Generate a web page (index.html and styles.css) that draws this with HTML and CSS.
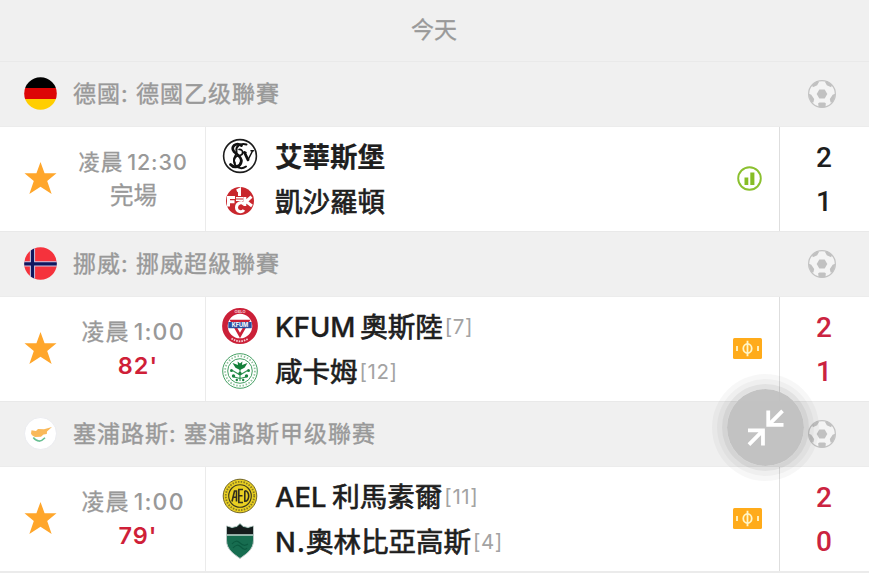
FILE: index.html
```
<!DOCTYPE html>
<html lang="zh-Hant">
<head>
  <meta charset="UTF-8">
  <meta name="viewport" content="width=device-width, initial-scale=1.0">
  <title>今天</title>
  <link rel="stylesheet" href="styles.css">
</head>
<body>

<!-- Shared icons -->
<svg class="defs" width="0" height="0">
  <symbol id="star" viewBox="0 0 34 34">
    <path fill="#ffa62b" d="M17 0.5 L21.2 12 H33.5 L23.9 20 L28.5 33.5 L17 25.9 L5.5 33.5 L10.1 20 L0.5 12 H12.8 Z"/>
  </symbol>
  <symbol id="ball" viewBox="0 0 28 28">
    <circle cx="14" cy="14" r="13.4" fill="#f4f4f4" stroke="#c3c3c3" stroke-width="1.2"/>
    <g fill="#c1c1c1">
      <path d="M11.3 9.5 H16.7 L19.3 14 L16.7 18.6 H11.3 L8.7 14 Z"/>
      <path d="M4 5 L9 0.9 L11 2 L9.2 5.3 L4.8 7.2 Z"/>
      <path d="M24 5 L19 0.9 L17 2 L18.8 5.3 L23.2 7.2 Z"/>
      <path d="M0.8 13.8 L3.3 14.8 L6.2 19 L5.4 22.4 L3.3 22.3 Q0.8 18.5 0.8 13.8 Z"/>
      <path d="M27.2 13.8 L24.7 14.8 L21.8 19 L22.6 22.4 L24.7 22.3 Q27.2 18.5 27.2 13.8 Z"/>
      <path d="M10.2 23.3 L11.5 22.4 H16.5 L17.8 23.3 L17.5 27 Q14 28.2 10.5 27 Z"/>
    </g>
  </symbol>
  <symbol id="pitch" viewBox="0 0 29 21">
    <rect width="29" height="21" rx="1.5" fill="#ffab1a"/>
    <g fill="none" stroke="#fff6c8" stroke-width="1.8">
      <ellipse cx="14.5" cy="10.5" rx="4.2" ry="4.6"/>
      <path d="M14.5 2.8 V18.2 M4 8 V13 M25 8 V13"/>
    </g>
  </symbol>
</svg>

<div class="today">今天</div>

<!-- Germany -->
<div class="league">
  <svg class="flag" viewBox="0 0 33 33">
    <clipPath id="round"><circle cx="16.5" cy="16.5" r="16.3"/></clipPath>
    <g clip-path="url(#round)">
      <rect width="33" height="11" fill="#000"/>
      <rect y="11" width="33" height="11" fill="#dd0606"/>
      <rect y="22" width="33" height="11" fill="#ffce00"/>
    </g>
  </svg>
  <span class="league-name">德國<i>:</i>德國乙级聯賽</span>
  <svg class="ball"><use href="#ball"/></svg>
</div>
<div class="match">
  <svg class="star"><use href="#star"/></svg>
  <div class="when">
    <div class="time small">凌晨<b>12:30</b></div>
    <div class="status">完場</div>
  </div>
  <div class="teams">
    <div class="team winner">
      <svg class="crest" viewBox="0 0 36 36">
        <circle cx="18" cy="18" r="16.4" fill="#fff" stroke="#1c1c1c" stroke-width="1.6"/>
        <g fill="none" stroke="#111" stroke-linecap="round">
          <path stroke-width="2.8" d="M19.5 7.5 C14 3.8 8 9 12 13.6 C14.5 16.5 20 18.5 19.3 23.5 C18.5 29 12 30.5 8.5 26.5"/>
          <path stroke-width="2" d="M24.5 6.5 C18 4.8 13.5 8.5 14.5 13 C15.5 17 12 17 12 22.5 C12 29.5 19 32 24 28.5"/>
          <path stroke-width="1.7" d="M17 11.5 C21.5 11 22 17 17.5 17.5 C13 18 10.5 22 13 25"/>
          <path stroke-width="2.8" d="M22.5 14.5 L26 21.8"/>
          <path stroke-width="1.5" d="M26 21.8 L30.5 13 M21 14.5 H24 M29 12.8 H31.5"/>
        </g>
      </svg>
      <span class="name">艾華斯堡</span>
    </div>
    <div class="team">
      <svg class="crest" viewBox="0 0 36 36">
        <circle cx="18" cy="18" r="14" fill="#c9272d"/>
        <g fill="none" stroke="#fff" stroke-width="3">
          <path d="M14.8 7.8 L17.5 6.5 V13"/>
          <path d="M6.5 23.5 V14.5 H13 M6.5 18.7 H12.5"/>
          <path d="M22.8 14 V23 M29.5 13.7 L24 18.5 L30 23"/>
          <path d="M22 21.5 C20 18 14.5 20 14.5 24.5 C14.5 29 20 30 22 27"/>
        </g>
        <path stroke="#fff" stroke-width="1.6" d="M14 14.7 H21 M14 17.3 H21"/>
      </svg>
      <span class="name">凱沙羅頓</span>
    </div>
  </div>
  <svg class="stats" viewBox="0 0 25 25">
    <circle cx="12.5" cy="12.5" r="11.3" fill="#fff" stroke="#8bc02f" stroke-width="1.9"/>
    <path fill="#86bd25" d="M7.5 11.5 H11.3 V19 H7.5 Z M13.3 6.5 H17.4 V19 H13.3 Z"/>
  </svg>
  <div class="score"><span>2</span><span>1</span></div>
</div>

<!-- Norway -->
<div class="league">
  <svg class="flag" viewBox="0 0 33 33">
    <g clip-path="url(#round)">
      <rect width="33" height="33" fill="#f5323c"/>
      <path stroke="#cfc8e4" stroke-width="5.2" d="M8.5 0 V33 M0 16.8 H33"/>
      <path stroke="#10175f" stroke-width="3.2" d="M8.5 0 V33 M0 16.8 H33"/>
    </g>
  </svg>
  <span class="league-name">挪威<i>:</i>挪威超級聯賽</span>
  <svg class="ball"><use href="#ball"/></svg>
</div>
<div class="match live">
  <svg class="star"><use href="#star"/></svg>
  <div class="when">
    <div class="time">凌晨<b>1:00</b></div>
    <div class="status">82'</div>
  </div>
  <div class="teams">
    <div class="team">
      <svg class="crest" viewBox="0 0 36 36">
        <circle cx="18" cy="18" r="15.1" fill="#fff" stroke="#cb2038" stroke-width="5.6"/>
        <path d="M9.8 13 H26.2 L18 27.5 Z" fill="#fff" stroke="#cb2038" stroke-width="2.6"/>
        <rect x="6.3" y="14" width="23.4" height="6.2" fill="#2b4fa0"/>
        <text class="crest-kfum" x="18" y="19">KFUM</text>
        <text class="crest-arc" x="18" y="4.7">OSLO</text>
        <path fill="none" stroke="#f6cfd5" stroke-width="1.8" stroke-dasharray="1.6 1" d="M9.5 30.4 Q18 36.2 26.5 30.4"/>
      </svg>
      <span class="name"><b class="kfum">KFUM</b>奧斯陸</span><span class="rank">[7]</span>
    </div>
    <div class="team">
      <svg class="crest" viewBox="0 0 36 36">
        <g fill="none" stroke="#2f9450">
          <circle cx="18" cy="18" r="17.3" fill="#fff" stroke-width="0.9"/>
          <circle cx="18" cy="18" r="14.9" stroke="#91c49e" stroke-width="1.8" stroke-dasharray="1.5 1.7"/>
          <circle cx="18" cy="18" r="12.3" stroke-width="0.9"/>
          <path stroke-width="1.1" d="M18 16 V28 M18 22 L10.5 17.5 M18 22 L25.5 17.5 M18 25.5 L12 24 M18 25.5 L24 24"/>
        </g>
        <path fill="#14803a" d="M10.5 10 L16 12 L15.6 8.5 L18 10.5 L20.4 8.5 L20 12 L25.5 10 L22.5 14.8 L18 17 L13.5 14.8 Z"/>
        <g fill="#1b8340">
          <circle cx="9.5" cy="17.5" r="1.5"/><circle cx="26.5" cy="17.5" r="1.5"/>
          <circle cx="11.5" cy="23" r="1.7"/><circle cx="24.5" cy="23" r="1.7"/>
          <circle cx="18" cy="20.5" r="1.7"/><circle cx="14.8" cy="27" r="1.2"/><circle cx="21.2" cy="27" r="1.2"/>
        </g>
      </svg>
      <span class="name">咸卡姆</span><span class="rank">[12]</span>
    </div>
  </div>
  <svg class="pitch"><use href="#pitch"/></svg>
  <div class="score"><span>2</span><span>1</span></div>
</div>

<!-- Cyprus -->
<div class="league">
  <svg class="flag" viewBox="0 0 33 33">
    <circle cx="16.5" cy="16.5" r="16" fill="#fff" stroke="#e7e9ee" stroke-width="0.8"/>
    <path fill="#f9b95a" d="M7 16.5 L7.5 13.3 L12 14 L14 12 L20 12.2 L28 10 L23 14.4 L22.8 17 L19.5 17.5 L17 19.7 L11 20 L8 18.3 Z"/>
    <path fill="none" stroke="#67bf92" stroke-width="1.6" d="M9.3 20.5 Q14.8 27.5 21 20.8"/>
  </svg>
  <span class="league-name">塞浦路斯<i>:</i>塞浦路斯甲级聯赛</span>
  <svg class="ball"><use href="#ball"/></svg>
</div>
<div class="match live">
  <svg class="star"><use href="#star"/></svg>
  <div class="when">
    <div class="time">凌晨<b>1:00</b></div>
    <div class="status">79'</div>
  </div>
  <div class="teams">
    <div class="team">
      <svg class="crest" viewBox="0 0 36 36">
        <g fill="#e9cf22" stroke="#3c3a20">
          <circle cx="18" cy="18" r="16.8" stroke="#716526" stroke-width="1"/>
          <circle cx="18" cy="18" r="14.2" stroke="#857924" stroke-width="1.8" stroke-dasharray="1.5 1.3"/>
          <circle cx="18" cy="18" r="11.3" stroke-width="1.1"/>
        </g>
        <path fill="none" stroke="#302e1e" stroke-width="1.6" d="M10 23.5 L12.5 13 H14.5 V23.5 M11 19.3 H14.5 M21 11.5 H16.8 V24.5 H21 M16.8 17.8 H20.5 M22.8 12.8 V23.3 C28 23.5 28 12.6 22.8 12.8"/>
      </svg>
      <span class="name"><b class="ael">AEL</b>利馬素爾</span><span class="rank">[11]</span>
    </div>
    <div class="team">
      <svg class="crest" viewBox="0 0 36 36">
        <path fill="#176d50" stroke="#b9c6c3" stroke-width="1" d="M4.5 3 L10 4.5 L15 3.3 L18 0.6 L21 3.3 L26 4.5 L31.5 3 V17 C31.5 27 24 31 18 35.5 C12 31 4.5 27 4.5 17 Z"/>
        <path fill="#151c1c" d="M5 3.6 L10 5.2 L15 3.9 L18 1.2 L21 3.9 L26 5.2 L31 3.6 V11.5 H5 Z"/>
        <path stroke="#dbe5e2" stroke-width="1.3" d="M5 12 H31"/>
        <path fill="none" stroke="#0c5a40" stroke-width="1.2" d="M10 21 Q14 16 18 20 T26 21 M11 25 Q15 20 19 24 T25 25"/>
      </svg>
      <span class="name"><b class="n">N.</b>奧林比亞高斯</span><span class="rank">[4]</span>
    </div>
  </div>
  <svg class="pitch"><use href="#pitch"/></svg>
  <div class="score"><span>2</span><span>0</span></div>
</div>
<div class="next"></div>

<!-- Floating collapse button -->
<div class="collapse">
  <svg viewBox="0 0 38 38" fill="none" stroke="#fff" stroke-width="3.9">
    <path d="M36.5 2 L22.5 16 M21.8 1.5 V16.4 H37.5"/>
    <path d="M2 36.5 L16 22.5 M1 21.9 H16.4 V37.5"/>
  </svg>
</div>

</body>
</html>
```
FILE: styles.css
```
* {
  box-sizing: border-box;
}

body {
  margin: 0;
  height: 573px;
  overflow: hidden;
  position: relative;
  background: #fff;
  color: #1e1e1e;
  font-family: Inter, "Noto Sans CJK TC", "Noto Sans CJK SC", sans-serif;
  white-space: nowrap;
}

.defs {
  position: absolute;
}

.today {
  height: 61px;
  line-height: 60px;
  padding-right: 1px;
  text-align: center;
  font-size: 23px;
  background: #f0f0f0;
  color: #999;
  -webkit-text-stroke: 0.3px #999;
}

/* League header */
.league {
  height: 66px;
  display: flex;
  align-items: center;
  padding: 0 33px 1px 24px;
  background: #f0f0f0;
  border-top: 1px solid #e9e9e9;
  border-bottom: 1px solid #ececec;
}

.flag {
  width: 33px;
  height: 33px;
}

.league-name {
  margin-left: 16px;
  padding-bottom: 3px;
  flex: 1;
  font-size: 23px;
  letter-spacing: 1px;
  color: #999;
  -webkit-text-stroke: 0.4px #999;
}

.league-name i {
  display: inline-block;
  width: 15px;
  font-style: normal;
}

.ball {
  width: 28px;
  height: 28px;
}

/* Match row */
.match {
  height: 104px;
  display: flex;
  align-items: center;
  padding-left: 24px;
}

.star {
  width: 33px;
  height: 34px;
  margin-bottom: 2px;
}

.when {
  width: 149px;
  height: 104px;
  padding: 18px 0 0 4px;
  display: flex;
  flex-direction: column;
  align-items: center;
  border-right: 1px solid #ebebeb;
  color: #999;
}

.when div {
  height: 34px;
  line-height: 35px;
}

.time {
  font-size: 23px;
  letter-spacing: 1.2px;
  -webkit-text-stroke: 0.3px #999;
}

.time b {
  font-weight: 500;
  margin-left: 4px;
  -webkit-text-stroke: 0;
}

.time.small {
  font-size: 21.5px;
  letter-spacing: 0.9px;
}

.status {
  padding-left: 1px;
  font-size: 23.5px;
  -webkit-text-stroke: 0.3px #999;
}

.match .status {
  line-height: 33px;
}

.live .status {
  padding-left: 10px;
  font-weight: 600;
  color: #cf1f38;
  letter-spacing: 1px;
  -webkit-text-stroke: 0;
}

.teams {
  flex: 1;
  padding: 0 0 2px 16px;
}

.team {
  height: 45px;
  display: flex;
  align-items: center;
}

.crest {
  width: 36px;
  height: 36px;
}

.name {
  margin-left: 17px;
  padding-bottom: 2px;
  font-size: 27.5px;
  -webkit-text-stroke: 0.7px #1e1e1e;
}

.winner .name {
  font-weight: 700;
  -webkit-text-stroke: 0.2px #1e1e1e;
}

.name b {
  font-weight: 500;
  -webkit-text-stroke: 0.3px #1e1e1e;
}

.kfum {
  margin-right: 5px;
  letter-spacing: -0.1px;
}

.ael {
  margin-right: 6px;
  letter-spacing: -0.1px;
}

.n {
  letter-spacing: 0.9px;
}

.rank {
  margin: 2px 0 0 2px;
  font-size: 20.5px;
  letter-spacing: 0.6px;
  color: #a3a3a3;
}

.crest-kfum {
  font: 700 5.6px Inter, sans-serif;
  fill: #fff;
  text-anchor: middle;
}

.crest-arc {
  font: 700 4px Inter, sans-serif;
  fill: #f6cfd5;
  text-anchor: middle;
}

.stats {
  width: 25px;
  height: 25px;
  margin: 0 17px 2px 0;
}

.pitch {
  width: 29px;
  height: 21px;
  margin: 0 17px 2px 0;
}

.score {
  width: 90px;
  height: 104px;
  padding: 8px 1px 0 0;
  display: flex;
  flex-direction: column;
  align-items: center;
  border-left: 1px solid #dedede;
  font: 500 28px Roboto, sans-serif;
}

.score span {
  height: 44px;
  line-height: 46px;
}

.live .score {
  color: #cb2340;
}

.next {
  height: 2px;
  background: #ebebeb;
}

/* Floating button */
.collapse {
  position: absolute;
  left: 727px;
  top: 389px;
  width: 77px;
  height: 77px;
  border-radius: 50%;
  display: flex;
  align-items: center;
  justify-content: center;
  background: rgba(190, 190, 190, 0.93);
  box-shadow: 0 0 0 5px rgba(0, 0, 0, 0.05), 0 0 0 10px rgba(0, 0, 0, 0.03), 0 0 0 15px rgba(0, 0, 0, 0.03);
}

.collapse svg {
  width: 37px;
  height: 37px;
}
```
